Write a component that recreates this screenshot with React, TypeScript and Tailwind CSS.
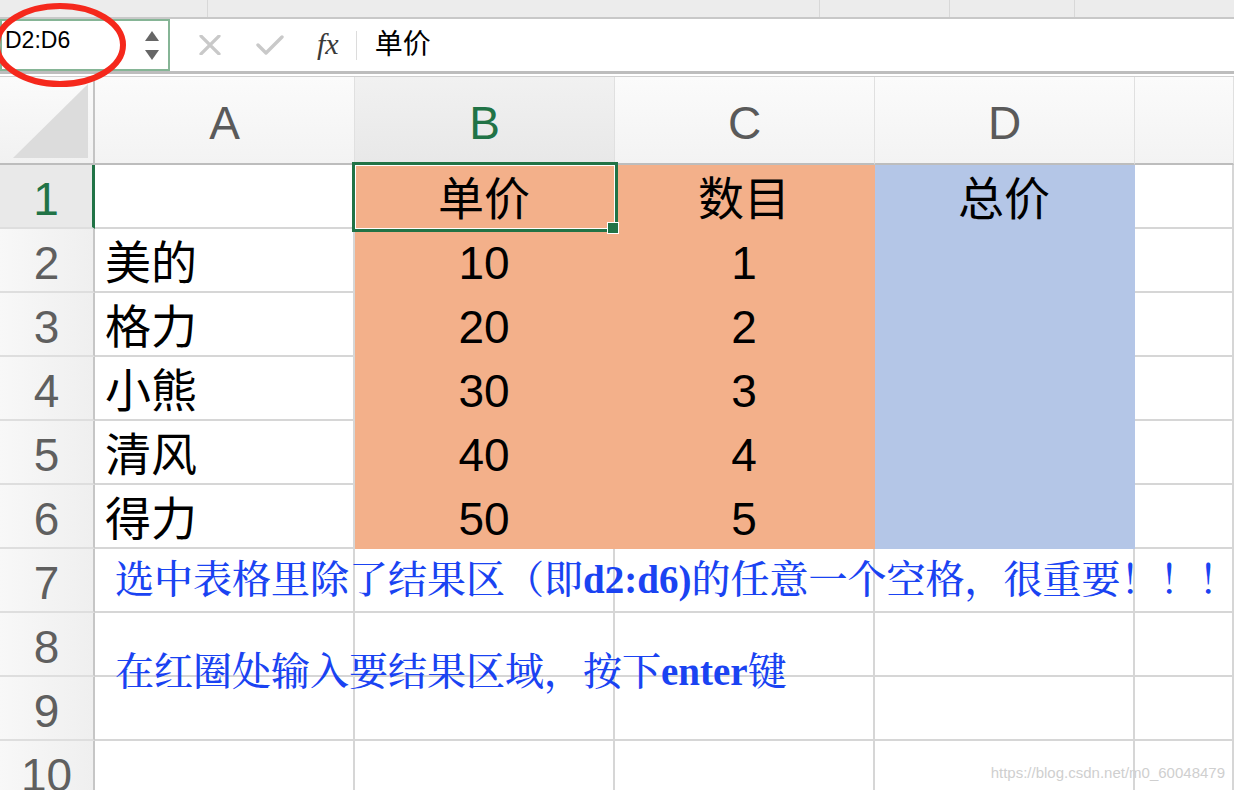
const names = ['美的', '格力', '小熊', '清风', '得力']

const sans = "font-['Liberation_Sans','Noto_Sans_CJK_SC',sans-serif]"

function Cell({ children, fill, align = 'center' }: { children?: React.ReactNode; fill?: 'orange' | 'blue'; align?: 'left' | 'center' }) {
  const color =
    fill === 'orange'
      ? 'bg-[#f3b08a] border-[#f3b08a]'
      : fill === 'blue'
        ? 'bg-[#b4c6e7] border-[#b4c6e7]'
        : 'bg-white border-[#d6d6d6]'
  return (
    <div
      className={`h-[64px] border-r-2 border-b-2 flex items-center pt-[6px] text-[46px] text-black ${color} ${
        align === 'left' ? 'justify-start pl-[10px]' : 'justify-center'
      }`}
    >
      {children}
    </div>
  )
}

function RowHead({ n, active }: { n: number; active?: boolean }) {
  return (
    <div
      className={`h-[64px] border-b-2 border-b-[#dedede] flex items-center justify-center pt-[6px] text-[46px] ${
        active
          ? 'bg-[#e9e9e9] border-r-[3px] border-r-[#217346] text-[#217346]'
          : 'bg-gradient-to-r from-[#f8f8f8] to-[#efefef] border-r-2 border-r-[#c6c6c6] text-[#5f5f5f]'
      }`}
    >
      {n}
    </div>
  )
}

export default function App() {
  const rows = [
    { a: '', b: '单价', c: '数目' },
    ...names.map((a, i) => ({ a, b: String((i + 1) * 10), c: String(i + 1) })),
  ]

  return (
    <div className={`relative w-[1234px] h-[790px] overflow-hidden bg-white ${sans}`}>
      {/* toolbar remnant */}
      <div className="h-[19px] bg-[#ececec] border-b-2 border-[#c8c8c8] flex">
        <div className="w-[208px] border-r border-[#d8d8d8]" />
        <div className="w-[612px] border-r border-[#d8d8d8]" />
        <div className="w-[130px] border-r border-[#d8d8d8]" />
        <div className="w-[125px] border-r border-[#d8d8d8]" />
      </div>

      {/* formula bar */}
      <div className="h-[52px] flex items-stretch bg-white">
        <div className="w-[170px] border-2 border-[#86b596] flex justify-between">
          <span className="pl-[3px] pt-[4px] text-[23px] leading-[30px] text-black">D2:D6</span>
          <div className="flex flex-col justify-center gap-[9px] pr-[9px]">
            <svg width="14" height="10" viewBox="0 0 14 10"><path d="M7 0 L14 10 L0 10 Z" fill="#666" /></svg>
            <svg width="14" height="10" viewBox="0 0 14 10"><path d="M0 0 L14 0 L7 10 Z" fill="#666" /></svg>
          </div>
        </div>
        <div className="flex items-center">
          <svg className="ml-[28px]" width="24" height="20" viewBox="0 0 24 20">
            <path d="M3 1 L21 19 M21 1 L3 19" stroke="#c9c9c9" strokeWidth="3.2" strokeLinecap="round" />
          </svg>
          <svg className="ml-[34px]" width="28" height="20" viewBox="0 0 28 20">
            <path d="M2 10 L10 18 L26 2" stroke="#c9c9c9" strokeWidth="3.4" fill="none" strokeLinecap="round" strokeLinejoin="round" />
          </svg>
          <span className="ml-[33px] font-['Liberation_Serif',serif] italic text-[30px] text-[#3a3a3a] leading-none pb-[2px]">fx</span>
          <div className="ml-[17px] w-px h-[29px] bg-[#dcdcdc]" />
          <span className="ml-[18px] text-[28px] text-black leading-none">单价</span>
        </div>
      </div>
      <div className="h-[3px] bg-[#bdbdbd]" />
      <div className="h-[3px] bg-white border-b border-[#d0d0d0]" />

      {/* sheet */}
      <div className="grid grid-cols-[95px_260px_260px_260px_260px_1fr]">
        <div className="h-[88px] border-r-2 border-r-[#c4c4c4] border-b-2 border-b-[#bdbdbd] bg-gradient-to-b from-[#fbfbfb] to-[#f1f1f1] flex items-end justify-end pr-[5px] pb-[5px]">
          <svg width="75" height="74" viewBox="0 0 75 74"><path d="M75 0 L75 74 L0 74 Z" fill="#dcdcdc" /></svg>
        </div>
        {['A', 'B', 'C', 'D', ''].map((l) => (
          <div
            key={l}
            className={`h-[88px] border-r border-r-[#e0e0e0] border-b-2 border-b-[#bdbdbd] flex items-center justify-center pt-[6px] text-[46px] ${
              l === 'B'
                ? 'bg-gradient-to-b from-[#f1f1f1] to-[#e8e8e8] text-[#217346]'
                : 'bg-gradient-to-b from-[#fbfbfb] to-[#f3f3f3] text-[#5a5a5a]'
            }`}
          >
            {l}
          </div>
        ))}

        {rows.map((r, i) => (
          <div key={i} className="contents">
            <RowHead n={i + 1} active={i === 0} />
            <Cell align="left">{r.a}</Cell>
            <Cell fill="orange">{r.b}</Cell>
            <Cell fill="orange">{r.c}</Cell>
            <Cell fill="blue">{i === 0 ? '总价' : ''}</Cell>
            <Cell />
          </div>
        ))}
        {[7, 8, 9, 10].map((n) => (
          <div key={n} className="contents">
            <RowHead n={n} />
            <Cell />
            <Cell />
            <Cell />
            <Cell />
            <Cell />
          </div>
        ))}
      </div>

      {/* active cell */}
      <div className="absolute left-[352px] top-[162px] w-[266px] h-[70px] border-[3px] border-[#217346] shadow-[inset_0_0_0_1px_white]" />
      <div className="absolute left-[607px] top-[222px] w-[12px] h-[12px] bg-[#217346] border border-white" />

      {/* notes */}
      <div className="absolute left-[115px] top-[558px] text-[39px] leading-[44px] font-medium text-[#1a43f2] whitespace-nowrap font-['Liberation_Serif','Noto_Serif_CJK_SC','Noto_Sans_CJK_SC',serif]">
        选中表格里除了结果区（即<b>d2:d6)</b>的任意一个空格，很重要！！！
      </div>
      <div className="absolute left-[115px] top-[650px] text-[39px] leading-[44px] font-medium text-[#1a43f2] whitespace-nowrap font-['Liberation_Serif','Noto_Serif_CJK_SC','Noto_Sans_CJK_SC',serif]">
        在红圈处输入要结果区域，按下<b>enter</b>键
      </div>

      {/* red circle */}
      <svg className="absolute left-0 top-0" width="140" height="100" viewBox="0 0 140 100">
        <ellipse cx="60" cy="45" rx="63" ry="39" fill="none" stroke="#f5281c" strokeWidth="6" />
      </svg>

      <div className="absolute right-[9px] top-[762px] text-[15px] text-[#cfcfcf] font-['Liberation_Sans',sans-serif]">
        https://blog.csdn.net/m0_60048479
      </div>
    </div>
  )
}
